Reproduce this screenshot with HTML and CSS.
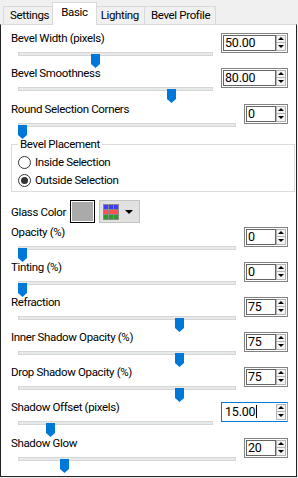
FILE: index.html
```html
<!DOCTYPE html>
<html>

<head>
<link rel="stylesheet" href="styles.css">
</head>

<body>

	<!--Tab strip-->
	<div class="tabs">
		<div class="tab">Settings</div>
		<div class="tab active">Basic</div>
		<div class="tab">Lighting</div>
		<div class="tab">Bevel Profile</div>
	</div>

	<!--Basic page-->
	<div class="panel">
		<div class="row">
			<div class="row-main">
				<div class="label">Bevel Width (pixels)</div>
				<div class="slider"><div class="track"></div><span class="thumb" style="left: 73px"></span></div>
			</div>
			<div class="spin wide"><div class="field">50.00</div><div class="arrows"><span class="up"></span><span class="down"></span></div></div>
		</div>
		<div class="row">
			<div class="row-main">
				<div class="label">Bevel Smoothness</div>
				<div class="slider"><div class="track"></div><span class="thumb" style="left: 149px"></span></div>
			</div>
			<div class="spin wide"><div class="field">80.00</div><div class="arrows"><span class="up"></span><span class="down"></span></div></div>
		</div>
		<div class="row row-gap">
			<div class="row-main">
				<div class="label">Round Selection Corners</div>
				<div class="slider"><div class="track"></div><span class="thumb" style="left: 0px"></span></div>
			</div>
			<div class="spin"><div class="field">0</div><div class="arrows"><span class="up"></span><span class="down"></span></div></div>
		</div>

		<fieldset class="group">
			<legend>Bevel Placement</legend>
			<div class="radio"><span class="dot"></span>Inside Selection</div>
			<div class="radio"><span class="dot checked"></span>Outside Selection</div>
		</fieldset>

		<div class="color-row">
			<span class="color-label">Glass Color</span>
			<span class="swatch"></span>
			<span class="palette">
				<span class="grid">
					<i class="b"></i><i class="b"></i><i class="b"></i>
					<i class="r"></i><i class="r"></i><i class="r"></i>
					<i class="g"></i><i class="g"></i><i class="g"></i>
				</span>
				<span class="caret"></span>
			</span>
		</div>

		<div class="row">
			<div class="row-main">
				<div class="label">Opacity (%)</div>
				<div class="slider"><div class="track"></div><span class="thumb" style="left: 0px"></span></div>
			</div>
			<div class="spin"><div class="field">0</div><div class="arrows"><span class="up"></span><span class="down"></span></div></div>
		</div>
		<div class="row">
			<div class="row-main">
				<div class="label">Tinting (%)</div>
				<div class="slider"><div class="track"></div><span class="thumb" style="left: 0px"></span></div>
			</div>
			<div class="spin"><div class="field">0</div><div class="arrows"><span class="up"></span><span class="down"></span></div></div>
		</div>
		<div class="row">
			<div class="row-main">
				<div class="label">Refraction</div>
				<div class="slider"><div class="track"></div><span class="thumb" style="left: 157px"></span></div>
			</div>
			<div class="spin"><div class="field">75</div><div class="arrows"><span class="up"></span><span class="down"></span></div></div>
		</div>
		<div class="row">
			<div class="row-main">
				<div class="label">Inner Shadow Opacity (%)</div>
				<div class="slider"><div class="track"></div><span class="thumb" style="left: 157px"></span></div>
			</div>
			<div class="spin"><div class="field">75</div><div class="arrows"><span class="up"></span><span class="down"></span></div></div>
		</div>
		<div class="row">
			<div class="row-main">
				<div class="label">Drop Shadow Opacity (%)</div>
				<div class="slider"><div class="track"></div><span class="thumb" style="left: 157px"></span></div>
			</div>
			<div class="spin"><div class="field">75</div><div class="arrows"><span class="up"></span><span class="down"></span></div></div>
		</div>
		<div class="row">
			<div class="row-main">
				<div class="label">Shadow Offset (pixels)</div>
				<div class="slider"><div class="track"></div><span class="thumb" style="left: 28px"></span></div>
			</div>
			<div class="spin wide focus"><div class="field">15.00<span class="cursor"></span></div><div class="arrows"><span class="up"></span><span class="down"></span></div></div>
		</div>
		<div class="row row-gap">
			<div class="row-main">
				<div class="label">Shadow Glow</div>
				<div class="slider"><div class="track"></div><span class="thumb" style="left: 42px"></span></div>
			</div>
			<div class="spin"><div class="field">20</div><div class="arrows"><span class="up"></span><span class="down"></span></div></div>
		</div>
	</div>

</body>
</html>
```

FILE: styles.css
```css
* {
    box-sizing: border-box;
}
body {
    margin: 0;
    width: 298px;
    height: 478px;
    background-color: #f0f0f0;
    font-family: Roboto, "Liberation Sans", sans-serif;
    font-size: 11.5px;
    letter-spacing: -0.35px;
    color: #000;
    overflow: hidden;
}

/* Tab strip */
.tabs {
    display: flex;
    align-items: flex-end;
    height: 24px;
    padding-left: 3px;
}
.tab {
    height: 18px;
    line-height: 17px;
    padding: 0 5px 0 6px;
    border: 1px solid #d9d9d9;
    border-bottom: none;
    margin-left: -1px;
    background-color: #f0f0f0;
}
.tab:first-child {
    margin-left: 0;
}
.tab.active {
    position: relative;
    z-index: 1;
    height: 23px;
    line-height: 19px;
    margin: 0 -2px -1px -3px;
    padding: 0 8px;
    background-color: #fff;
}

/* Page */
.panel {
    width: 297px;
    height: 453px;
    padding-top: 6px;
    background-color: #fff;
    border: 1px solid #222;
    border-top-color: #d9d9d9;
}

.row {
    display: flex;
    align-items: flex-start;
    height: 35px;
    padding: 0 8px 0 10px;
}
.row-gap {
    margin-top: 1px;
}
.row-main {
    flex: 1;
}
.label {
    height: 14px;
    line-height: 14px;
    white-space: nowrap;
}

/* Trackbar */
.slider {
    position: relative;
    height: 21px;
    margin-left: 7px;
}
.track {
    margin-top: 7px;
    height: 4px;
    background-color: #e7eaea;
    border: 1px solid #d6d6d6;
}
.thumb {
    position: absolute;
    top: 2px;
    width: 9px;
    height: 14px;
    background-color: #0078d7;
    clip-path: polygon(0 0, 100% 0, 100% 72%, 50% 100%, 0 72%);
}

/* Spin box */
.spin {
    display: flex;
    width: 44px;
    height: 20px;
    margin: 2px 0 0 8px;
    padding: 1px;
    background-color: #fff;
    border: 1px solid #828282;
}
.spin.wide {
    width: 67px;
}
.spin.focus {
    border-color: #0078d7 #adadad #0078d7 #0078d7;
}
.field {
    flex: 1;
    height: 16px;
    line-height: 14px;
    padding-left: 1px;
    border: 1px solid #646464;
    font-size: 12.5px;
    letter-spacing: -0.2px;
}
.spin.focus .field {
    border-color: #fff;
}
.cursor {
    display: inline-block;
    width: 1px;
    height: 13px;
    margin-left: 1px;
    vertical-align: -2px;
    background-color: #000;
}
.arrows {
    display: flex;
    flex-direction: column;
    width: 10px;
}
.arrows span {
    position: relative;
    height: 8px;
    border: 1px solid #b4b4b4;
    background-color: #f4f4f4;
}
.arrows span + span {
    border-top: none;
}
.arrows span::after {
    content: "";
    position: absolute;
    left: 1px;
    border-left: 3px solid transparent;
    border-right: 3px solid transparent;
}
.arrows .up::after {
    top: 1px;
    border-bottom: 3px solid #000;
}
.arrows .down::after {
    top: 2px;
    border-top: 3px solid #000;
}

/* Bevel Placement group */
.group {
    margin: 0 1px 0 10px;
    padding: 2px 0 2px 6px;
    border: 1px solid #dcdcdc;
}
.group legend {
    padding: 0 2px;
    line-height: 14px;
}
.radio {
    display: flex;
    align-items: center;
    height: 18px;
    white-space: nowrap;
}
.dot {
    position: relative;
    width: 13px;
    height: 13px;
    margin-right: 4px;
    border: 1px solid #333;
    border-radius: 50%;
    background-color: #fff;
}
.dot.checked::after {
    content: "";
    position: absolute;
    left: 2px;
    top: 2px;
    width: 7px;
    height: 7px;
    border-radius: 50%;
    background-color: #333;
}

/* Glass Color */
.color-row {
    display: flex;
    align-items: center;
    height: 23px;
    margin: 8px 0 2px 10px;
}
.color-label {
    width: 59px;
    white-space: nowrap;
}
.swatch {
    width: 25px;
    height: 23px;
    border: 1px solid #000;
    box-shadow: inset 0 0 0 1px #fff;
    background-color: #aaa;
}
.palette {
    display: flex;
    align-items: center;
    width: 41px;
    height: 23px;
    margin-left: 4px;
    padding-left: 3px;
    background-color: #e1e1e1;
    border: 1px solid #c4c4c4;
}
.grid {
    display: grid;
    grid-template-columns: repeat(3, 4px);
    grid-template-rows: repeat(3, 4px);
    gap: 1px;
    padding: 1px;
    background-color: #8a8a8a;
}
.grid i {
    display: block;
}
.grid .b { background-color: #3c3cff; }
.grid .r { background-color: #ff4e4e; }
.grid .g { background-color: #2e9a2e; }
.caret {
    margin-left: 6px;
    border-left: 4px solid transparent;
    border-right: 4px solid transparent;
    border-top: 4px solid #000;
}
```
